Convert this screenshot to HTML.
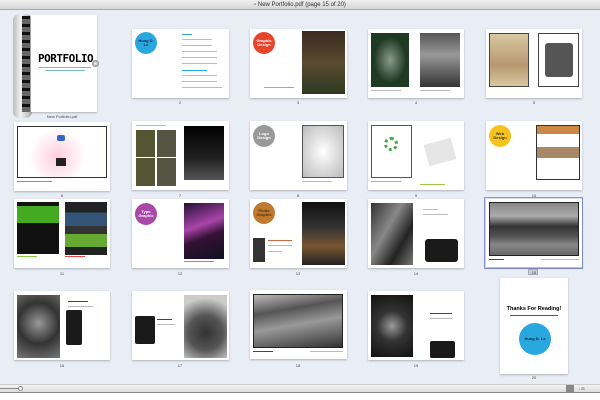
<!DOCTYPE html>
<html><head><meta charset="utf-8">
<style>
*{margin:0;padding:0;box-sizing:border-box}
body{width:600px;height:400px;overflow:hidden;background:#e9edf5;font-family:"Liberation Sans",sans-serif;position:relative}
.a{position:absolute}
.pg{position:absolute;background:#fff;box-shadow:0 1px 2px rgba(0,0,0,.25);overflow:hidden}
.ph{position:absolute;background:#222}
.lb{position:absolute;font-size:4px;color:#444;width:96px;text-align:center}
.c{position:absolute;border-radius:50%;color:#fff;font-size:4px;font-weight:bold;text-align:center;display:flex;align-items:center;justify-content:center;line-height:4px;padding:3px}
.t{position:absolute;height:1px;background:#bbb}
</style></head><body>
<div class="a" style="left:0;top:0;width:600px;height:10px;background:linear-gradient(#eee,#d6d6d6);border-bottom:1px solid #aaa;font-size:6px;color:#333;text-align:center;line-height:10px">▫ New Portfolio.pdf (page 15 of 20)</div>

<div class="a" style="left:13px;top:14px;width:19px;height:104px;border-radius:6px;background:linear-gradient(90deg,#bbb,#f2f2f2 40%,#aaa)"></div>
<div class="a" style="left:22px;top:16px;width:8px;height:96px;background:repeating-linear-gradient(#111 0 3px,#666 3px 8px)"></div>
<div class="pg" style="left:31px;top:15px;width:66px;height:97px">
<div class="a" style="left:7px;top:37px;font-size:11px;font-weight:bold;font-family:'DejaVu Sans Mono',monospace;letter-spacing:-0.5px">PORTFOLIO</div>
<div class="t" style="left:8px;top:52px;width:52px;background:#7bc"></div><div class="t" style="left:14px;top:55px;width:40px;background:#7bc"></div>
</div>
<div class="a" style="left:92px;top:60px;width:7px;height:7px;border-radius:50%;background:radial-gradient(#fff,#555)"></div>
<div class="lb" style="left:14px;top:114px">New Portfolio.pdf</div>

<div class="pg" style="left:132px;top:29px;width:97px;height:69px">
<div class="c" style="left:3px;top:3px;width:22px;height:22px;background:#29a8e0;color:#124">Hung D. Le</div>
<div class="t" style="left:50px;top:5px;width:10px;background:#29a8e0"></div>
<div class="t" style="left:50px;top:10px;width:30px"></div><div class="t" style="left:50px;top:16px;width:30px"></div>
<div class="t" style="left:50px;top:22px;width:35px"></div><div class="t" style="left:50px;top:28px;width:35px"></div>
<div class="t" style="left:50px;top:34px;width:35px"></div><div class="t" style="left:50px;top:41px;width:25px;background:#29a8e0"></div>
<div class="t" style="left:50px;top:46px;width:35px"></div><div class="t" style="left:50px;top:52px;width:35px"></div>
<div class="t" style="left:50px;top:58px;width:40px"></div></div>
<div class="lb" style="left:132px;top:100px">2</div>
<div class="pg" style="left:250px;top:29px;width:97px;height:69px">
<div class="c" style="left:3px;top:3px;width:22px;height:22px;background:#e8442c">Graphic Design</div>
<div class="ph" style="left:52px;top:2px;width:43px;height:63px;background:linear-gradient(#3a2a20,#5a4a30 50%,#2e3a22)"></div>
<div class="t" style="left:14px;top:58px;width:30px;background:#e88"></div></div>
<div class="lb" style="left:250px;top:100px">3</div>
<div class="pg" style="left:368px;top:29px;width:96px;height:69px">
<div class="ph" style="left:3px;top:4px;width:38px;height:54px;background:radial-gradient(#8a9a8a,#1e3a22 60%)"></div>
<div class="ph" style="left:52px;top:4px;width:40px;height:54px;background:linear-gradient(#555,#999 40%,#333)"></div>
<div class="t" style="left:3px;top:61px;width:30px"></div><div class="t" style="left:52px;top:61px;width:30px"></div></div>
<div class="lb" style="left:368px;top:100px">4</div>
<div class="pg" style="left:486px;top:29px;width:96px;height:69px">
<div class="ph" style="left:3px;top:4px;width:40px;height:54px;background:linear-gradient(#d8c8a0,#b89870 60%,#d8c8a0);border:1px solid #444"></div>
<div class="ph" style="left:52px;top:4px;width:41px;height:54px;background:#fff;border:1px solid #444"></div>
<div class="a" style="left:59px;top:14px;width:28px;height:34px;background:#555;border-radius:3px"></div></div>
<div class="lb" style="left:486px;top:100px">5</div>

<div class="pg" style="left:14px;top:122px;width:96px;height:69px">
<div class="ph" style="left:3px;top:4px;width:90px;height:52px;background:radial-gradient(circle at 45% 60%,#fcd,#fff 50%);border:1px solid #333"></div>
<div class="a" style="left:43px;top:13px;width:8px;height:6px;background:#36c;border-radius:2px"></div>
<div class="ph" style="left:42px;top:36px;width:10px;height:8px;background:#222"></div>
<div class="t" style="left:3px;top:59px;width:35px;background:#69c"></div></div>
<div class="lb" style="left:14px;top:193px">6</div>
<div class="pg" style="left:132px;top:121px;width:97px;height:69px">
<div class="ph" style="left:4px;top:9px;width:40px;height:56px;background:linear-gradient(90deg,#553 0 48%,#fff 48% 52%,#554 52%)"></div>
<div class="a" style="left:4px;top:36px;width:40px;height:1px;background:#fff"></div>
<div class="ph" style="left:52px;top:5px;width:40px;height:54px;background:linear-gradient(#000,#222 60%,#555)"></div>
<div class="t" style="left:4px;top:4px;width:30px"></div></div>
<div class="lb" style="left:132px;top:193px">7</div>
<div class="pg" style="left:250px;top:121px;width:97px;height:69px">
<div class="c" style="left:3px;top:4px;width:22px;height:22px;background:#999">Logo Design</div>
<div class="ph" style="left:52px;top:4px;width:42px;height:53px;background:radial-gradient(#fff,#bbb);border:1px solid #555"></div>
<div class="t" style="left:52px;top:60px;width:30px"></div></div>
<div class="lb" style="left:250px;top:193px">8</div>
<div class="pg" style="left:368px;top:121px;width:96px;height:69px">
<div class="ph" style="left:3px;top:4px;width:41px;height:53px;background:#fff;border:1px solid #555"></div>
<div class="a" style="left:16px;top:16px;width:14px;height:14px;border-radius:50%;border:3px dotted #4a4"></div>
<div class="a" style="left:58px;top:20px;width:28px;height:22px;background:#e6e6e6;transform:rotate(-15deg)"></div>
<div class="t" style="left:3px;top:60px;width:30px;background:#9c4"></div><div class="t" style="left:52px;top:63px;width:25px;background:#9c4"></div></div>
<div class="lb" style="left:368px;top:193px">9</div>
<div class="pg" style="left:486px;top:121px;width:96px;height:69px">
<div class="c" style="left:3px;top:4px;width:22px;height:22px;background:#f6c21c;color:#333">Web Design</div>
<div class="ph" style="left:50px;top:4px;width:44px;height:55px;background:linear-gradient(#c84 0 15%,#fff 15% 40%,#a86 40% 60%,#fff 60%);border:1px solid #333"></div></div>
<div class="lb" style="left:486px;top:193px">10</div>

<div class="pg" style="left:14px;top:199px;width:96px;height:69px">
<div class="ph" style="left:3px;top:3px;width:42px;height:52px;background:linear-gradient(#111 0 8%,#4a2 8% 40%,#111 40%)"></div>
<div class="ph" style="left:51px;top:3px;width:42px;height:53px;background:linear-gradient(#222 0 20%,#357 20% 45%,#333 45% 60%,#6a3 60% 85%,#222 85%)"></div>
<div class="t" style="left:3px;top:57px;width:20px;background:#8c4"></div><div class="t" style="left:51px;top:57px;width:20px;background:#e44"></div></div>
<div class="lb" style="left:14px;top:271px">11</div>
<div class="pg" style="left:132px;top:199px;width:97px;height:69px">
<div class="c" style="left:3px;top:4px;width:22px;height:22px;background:#a848a8">Typo Graphic</div>
<div class="ph" style="left:52px;top:4px;width:40px;height:56px;background:linear-gradient(160deg,#213 0,#a4a 40%,#313 60%,#112 100%)"></div>
<div class="t" style="left:52px;top:62px;width:30px;background:#e66"></div></div>
<div class="lb" style="left:132px;top:271px">12</div>
<div class="pg" style="left:250px;top:199px;width:97px;height:69px">
<div class="c" style="left:3px;top:3px;width:22px;height:22px;background:#c07a30;color:#531">Photo Graphic</div>
<div class="ph" style="left:3px;top:39px;width:12px;height:24px;background:#333"></div>
<div class="t" style="left:18px;top:41px;width:24px;background:#c64"></div><div class="t" style="left:18px;top:46px;width:24px"></div><div class="t" style="left:18px;top:52px;width:14px"></div>
<div class="ph" style="left:52px;top:3px;width:43px;height:63px;background:linear-gradient(#111,#333 40%,#7a5530 70%,#222)"></div></div>
<div class="lb" style="left:250px;top:271px">13</div>
<div class="pg" style="left:368px;top:199px;width:96px;height:69px">
<div class="ph" style="left:3px;top:4px;width:42px;height:62px;background:linear-gradient(120deg,#333,#888 40%,#222 70%,#777)"></div>
<div class="t" style="left:55px;top:10px;width:15px"></div><div class="t" style="left:55px;top:15px;width:25px"></div>
<div class="ph" style="left:57px;top:40px;width:33px;height:23px;background:#1a1a1a;border-radius:3px"></div></div>
<div class="lb" style="left:368px;top:271px">14</div>
<div class="a" style="left:484px;top:197px;width:99px;height:72px;border:1px solid #8796cc;background:#dfe5f3"></div>
<div class="pg" style="left:486px;top:199px;width:96px;height:68px">
<div class="ph" style="left:3px;top:3px;width:90px;height:54px;background:linear-gradient(#888 0,#aaa 25%,#333 45%,#555 65%,#888 80%,#666);border:1px solid #222"></div>
<div class="t" style="left:3px;top:60px;width:15px;background:#444"></div><div class="t" style="left:55px;top:60px;width:38px"></div></div>
<div class="a" style="left:528px;top:269px;width:10px;height:6px;background:#ccd;border:1px solid #aab"></div>
<div class="lb" style="left:486px;top:270px">15</div>

<div class="pg" style="left:14px;top:291px;width:96px;height:69px">
<div class="ph" style="left:3px;top:4px;width:43px;height:63px;background:radial-gradient(circle at 50% 45%,#999,#333 50%,#777)"></div>
<div class="t" style="left:54px;top:10px;width:20px;background:#444"></div><div class="t" style="left:54px;top:15px;width:25px"></div>
<div class="ph" style="left:52px;top:19px;width:16px;height:35px;background:#1a1a1a;border-radius:2px"></div></div>
<div class="lb" style="left:14px;top:363px">16</div>
<div class="pg" style="left:132px;top:291px;width:97px;height:69px">
<div class="ph" style="left:3px;top:25px;width:20px;height:28px;background:#1a1a1a;border-radius:2px"></div>
<div class="t" style="left:25px;top:28px;width:15px;background:#444"></div><div class="t" style="left:25px;top:33px;width:18px"></div>
<div class="ph" style="left:52px;top:4px;width:43px;height:63px;background:radial-gradient(circle at 50% 60%,#333,#555 40%,#ccc 80%)"></div></div>
<div class="lb" style="left:132px;top:363px">17</div>
<div class="pg" style="left:250px;top:290px;width:97px;height:69px">
<div class="ph" style="left:3px;top:4px;width:90px;height:54px;background:linear-gradient(170deg,#bbb,#555 30%,#999 55%,#333);border:1px solid #222"></div>
<div class="t" style="left:3px;top:61px;width:20px;background:#444"></div><div class="t" style="left:60px;top:61px;width:33px"></div></div>
<div class="lb" style="left:250px;top:363px">18</div>
<div class="pg" style="left:368px;top:291px;width:96px;height:69px">
<div class="ph" style="left:3px;top:4px;width:42px;height:62px;background:radial-gradient(circle at 50% 50%,#999,#333 40%,#111)"></div>
<div class="t" style="left:62px;top:22px;width:22px;background:#444"></div><div class="t" style="left:62px;top:27px;width:22px"></div>
<div class="ph" style="left:62px;top:50px;width:25px;height:17px;background:#1a1a1a;border-radius:2px"></div></div>
<div class="lb" style="left:368px;top:363px">19</div>
<div class="pg" style="left:500px;top:278px;width:68px;height:96px">
<div class="a" style="left:0;top:28px;width:68px;text-align:center;font-size:5.5px;font-weight:bold">Thanks For Reading!</div>
<div class="t" style="left:10px;top:37px;width:48px;background:#555"></div>
<div class="c" style="left:19px;top:45px;width:32px;height:32px;background:#29a8e0;color:#124">Hung D. Le</div></div>
<div class="lb" style="left:486px;top:375px">20</div>

<div class="a" style="left:0;top:384px;width:600px;height:9px;background:linear-gradient(#f4f4f4,#dcdcdc);border-top:1px solid #ccc;border-bottom:1px solid #888"></div>
<div class="a" style="left:0;top:388px;width:20px;height:1px;background:#888"></div>
<div class="a" style="left:18px;top:386px;width:5px;height:5px;border-radius:50%;background:#fff;border:1px solid #888"></div>
<div class="a" style="left:566px;top:385px;width:8px;height:7px;background:#888"></div>
<div class="a" style="left:579px;top:386px;font-size:4px;color:#666">⁞ ⊞</div>
<div class="a" style="left:0;top:393px;width:600px;height:7px;background:#fff"></div>
</body></html>
